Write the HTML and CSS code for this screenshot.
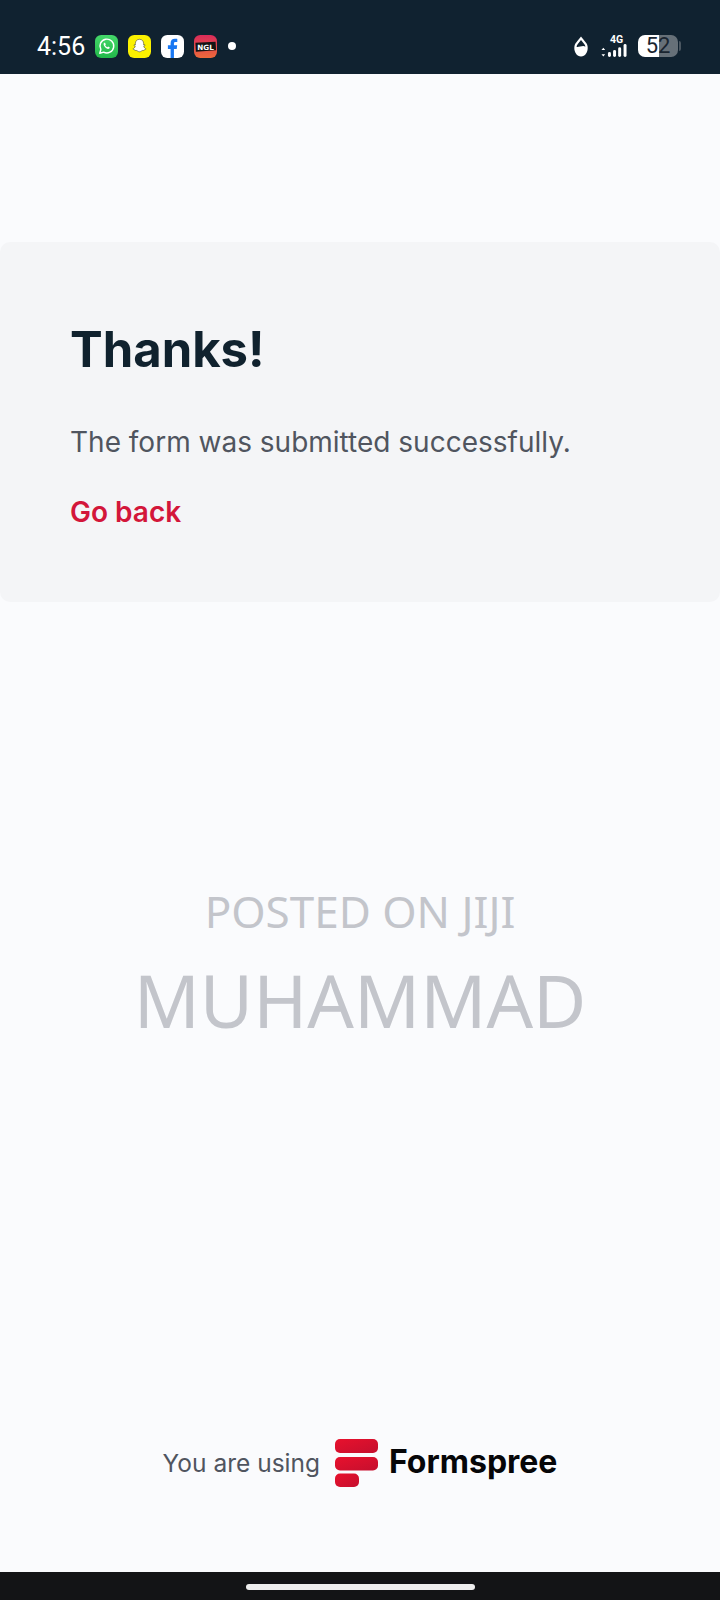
FILE: index.html
```html
<!DOCTYPE html>
<html lang="en">
<head>
<meta charset="utf-8">
<title>Thanks!</title>
<link rel="stylesheet" href="styles.css">
</head>
<body>
<div class="screen">
  <header class="status">
    <span class="time">4:56</span>
    <div class="apps">
      <svg class="app" viewBox="0 0 24 24"><defs><linearGradient id="wa" x1="0" y1="0" x2="0" y2="1"><stop offset="0" stop-color="#45d96a"/><stop offset="1" stop-color="#22b84a"/></linearGradient></defs><rect width="24" height="24" rx="6.5" fill="url(#wa)"/><path d="M5 19l1.1-3.9A7.2 7.2 0 1 1 9 17.9z" fill="none" stroke="#fff" stroke-width="1.5" stroke-linejoin="round"/><path d="M9.6 8.2c-.8.6-.8 1.9 0 3.3 1 1.7 2.4 2.8 3.9 3 1 .1 1.9-.5 2-1.4l-1.8-1-.8.8c-1-.4-1.8-1.2-2.3-2.2l.7-.9-.8-1.8z" fill="#fff"/></svg>
      <svg class="app" viewBox="0 0 24 24"><rect width="24" height="24" rx="6.5" fill="#fbf100"/><path d="M12 4.5c2.7 0 4.3 2 4.3 4.4v1.5l1.4-.2c.4.6-.4 1.2-1.3 1.5.3 1.3 1.3 2.3 2.5 2.8-.2.7-1.2.8-1.9 1-.3.8-.8.6-1.6.6-1.2 0-1.7 1.4-3.4 1.4s-2.2-1.4-3.4-1.4c-.8 0-1.3.2-1.6-.6-.7-.2-1.7-.3-1.900-1 1.200-.5 2.200-1.500 2.500-2.800-.9-.3-1.700-.9-1.300-1.500l1.400.2V8.900c0-2.400 1.600-4.400 4.300-4.400z" fill="#fff" stroke="#222" stroke-width=".5"/></svg>
      <svg class="app" viewBox="0 0 24 24"><rect width="24" height="24" rx="6.5" fill="#fff"/><path d="M10 24v-9.500H7.200v-3.700H10V8.500C10 5.500 11.800 4 14.400 4c1.200 0 2.300.1 2.600.2v3.200h-1.800c-1.400 0-1.700.7-1.700 1.600v1.800h3.400l-.5 3.700h-2.900V24z" fill="#1877f2"/></svg>
      <svg class="app" viewBox="0 0 24 24"><defs><linearGradient id="ngl" x1="0" y1="0" x2="0" y2="1"><stop offset="0" stop-color="#d92b5a"/><stop offset="1" stop-color="#ee6a3a"/></linearGradient></defs><rect width="24" height="24" rx="6.5" fill="url(#ngl)"/><path d="M1.500 8l21-1 .5 9-21 1.500z" fill="#151515"/><text class="ngl-text" x="12" y="15.200" text-anchor="middle">NGL</text></svg>
      <span class="dot"></span>
    </div>
    <div class="sys">
      <svg class="drop" viewBox="0 0 16 21"><path d="M8 0.500l5.200 6.500c3.400 4.600.8 13.500-5.200 13.500S-.6 11.600 2.800 7z" fill="#fff"/><path d="M8 4l3.200 4c.7.900 1.100 1.700 1.200 2.700C10 9 6 11.500 3.600 11c0-1 .4-2.100 1.200-3z" fill="#102230"/></svg>
      <div class="net">
        <span class="net-label">4G</span>
        <svg class="bars" viewBox="0 0 28 14"><path d="M2.500 4l2 2.500h-4zM2.500 13.500l-2-2.500h4z" fill="#fff"/><rect x="7.500" y="8.500" width="3.200" height="5.500" rx="1.600" fill="#fff"/><rect x="13" y="6.500" width="3.200" height="7.500" rx="1.600" fill="#fff"/><rect x="18.500" y="3.500" width="3.200" height="10.500" rx="1.600" fill="#fff"/><rect x="24.300" y="0" width="3.200" height="14" rx="1.600" fill="#fff"/></svg>
      </div>
      <div class="battery">
        <div class="batt-body"><span class="batt-num">52</span></div>
        <span class="batt-cap"></span>
      </div>
    </div>
  </header>

  <main class="page">
    <section class="card">
      <h1 class="title">Thanks!</h1>
      <p class="message">The form was submitted successfully.</p>
      <a class="back" href="#">Go back</a>
    </section>

    <section class="mark">
      <p class="mark-small">POSTED ON JIJI</p>
      <p class="mark-large">MUHAMMAD</p>
    </section>

    <footer class="foot">
      <span class="using">You are using</span>
      <svg class="logo" viewBox="0 0 43 48"><defs><linearGradient id="fs" x1="0" y1="0" x2="1" y2="1"><stop offset="0" stop-color="#e8112d"/><stop offset="1" stop-color="#c50f2e"/></linearGradient></defs><rect x="0" y="0" width="43" height="14" rx="5" fill="url(#fs)"/><rect x="0" y="18" width="43" height="13.500" rx="5" fill="url(#fs)"/><rect x="0" y="34.500" width="24" height="13.500" rx="5" fill="url(#fs)"/></svg>
      <span class="brand">Formspree</span>
    </footer>
  </main>

  <div class="navbar"><span class="handle"></span></div>
</div>
</body>
</html>
```
FILE: styles.css
```css
* { box-sizing: border-box; }
html, body { margin: 0; padding: 0; }
body { font-family: Inter, "Liberation Sans", sans-serif; background: #fafbfd; }
.screen { width: 720px; height: 1600px; display: flex; flex-direction: column; }

.status { height: 74px; flex: none; background: #102230; display: flex; align-items: center; padding: 18px 39px 0 37px; color: #fff; }
.time { font-family: Roboto, sans-serif; font-size: 25px; font-weight: 400; width: 58px; }
.apps { display: flex; align-items: center; gap: 10px; }
.app { width: 23px; height: 23px; display: block; }
.ngl-text { font-family: "DejaVu Sans", sans-serif; font-weight: 700; font-size: 7.5px; fill: #fff; }
.dot { width: 8px; height: 8px; border-radius: 50%; background: #fff; margin-left: 1px; }
.sys { margin-left: auto; display: flex; align-items: center; }
.drop { width: 16px; height: 21px; display: block; margin-right: 11px; }
.net { width: 28px; height: 22px; display: flex; flex-direction: column; align-items: center; margin-right: 10px; }
.net-label { font-family: Roboto, sans-serif; font-size: 10.5px; font-weight: 700; line-height: 9px; margin-left: 5px; }
.bars { width: 28px; height: 14px; display: block; }
.battery { display: flex; align-items: center; }
.batt-body { width: 40px; height: 22px; border-radius: 7px; background: linear-gradient(to right, #fff 21px, #667078 21px); display: flex; align-items: center; justify-content: center; }
.batt-num { font-family: Roboto, sans-serif; font-size: 22px; color: #1a2530; line-height: 22px; }
.batt-cap { width: 2px; height: 10px; background: #4a5660; border-radius: 0 2px 2px 0; margin-left: 1px; }

.page { flex: 1; display: flex; flex-direction: column; align-items: stretch; padding-top: 168px; }
.card { height: 360px; background: #f4f5f7; border-radius: 10px; padding: 80px 70px 0; }
.title { margin: 0; font-size: 49px; line-height: 56px; font-weight: 700; color: #10222e; }
.message { margin: 44px 0 0; font-size: 28px; line-height: 40px; font-weight: 400; color: #50555f; }
.back { display: block; margin-top: 30px; font-size: 28px; line-height: 40px; font-weight: 600; color: #d3163a; text-decoration: none; }

.mark { margin-top: 279px; text-align: center; color: #c3c5cb; font-family: "Noto Sans", "Open Sans", sans-serif; }
.mark-small { margin: 0; font-size: 44px; line-height: 60px; }
.mark-large { margin: 10px 0 0; font-size: 73px; line-height: 98px; }

.foot { margin-top: auto; margin-bottom: 85px; display: flex; align-items: center; justify-content: center; }
.using { font-size: 24.5px; color: #50555f; margin-right: 15px; }
.logo { width: 43px; height: 48px; display: block; margin-right: 11px; }
.brand { font-family: Inter, sans-serif; font-size: 32px; font-weight: 700; color: #060608; padding-bottom: 4px; }

.navbar { height: 28px; flex: none; background: #131416; display: flex; justify-content: center; padding-top: 12px; }
.handle { width: 229px; height: 6px; border-radius: 3px; background: #eeeeee; }
```
